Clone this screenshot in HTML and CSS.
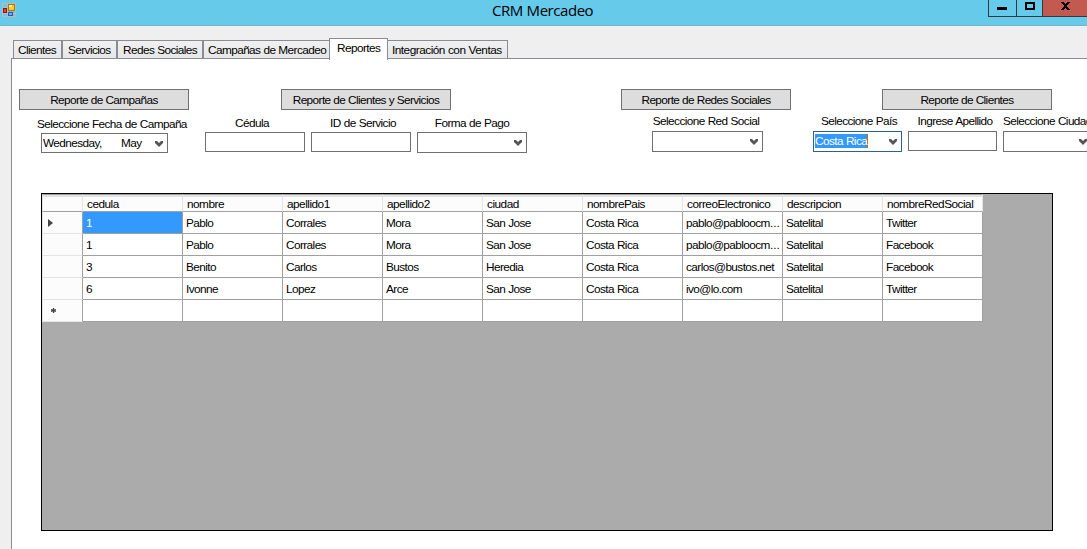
FILE: index.html
```html
<!DOCTYPE html>
<html lang="es">
<head>
<meta charset="utf-8">
<title>CRM Mercadeo</title>
<link rel="stylesheet" href="styles.css">
</head>
<body>
<header class="titlebar">
  <svg class="app-icon" width="14" height="14" viewBox="0 0 14 14" shape-rendering="crispEdges">
    <path d="M.5.5h13v13H.5zM5.500.5v13M.5 4.500h5M.5 10.500h13" fill="none" stroke="#bdb9b9"/>
    <path d="M1 5h4v5H1z" fill="#8d1414"/><path d="M2 6h2v3H2z" fill="#d9483c"/>
    <path d="M6 1h7v7H6z" fill="#a87808"/><path d="M7 2h5v5H7z" fill="#f8cb36"/><path d="M7 2h3v2H7z" fill="#ffec91"/>
    <path d="M6 9h5v4H6z" fill="#2b59b5"/><path d="M7 10h3v2H7z" fill="#78a6ee"/>
  </svg>
  <h1 class="title">CRM Mercadeo</h1>
  <div class="window-buttons">
    <span class="wbtn wbtn-min"><svg width="10" height="3"><path d="M0 0h10v3H0z"/></svg></span>
    <span class="wbtn wbtn-max"><svg width="10" height="8"><path d="M1 1h8v6H1z" fill="none" stroke="#000" stroke-width="2"/></svg></span>
    <span class="wbtn wbtn-close"><svg width="9" height="8" viewBox="0 0 9 8" shape-rendering="crispEdges"><path d="M0 0h3v1h1v1h1V1h1V0h3v1H8v1H7v1H6v2h1v1h1v1h1v1H6V7H5V6H4v1H3v1H0V7h1V6h1V5h1V3H2V2H1V1H0z"/></svg></span>
  </div>
</header>
<nav class="tabs">
  <span class="tab tab-cli">Clientes</span><span class="tab tab-ser">Servicios</span><span class="tab tab-red">Redes Sociales</span><span class="tab tab-cam">Campañas de Mercadeo</span><span class="tab tab-rep active">Reportes</span><span class="tab tab-int">Integración con Ventas</span>
</nav>
<main class="page">
  <section class="filters">
    <div class="group g-camp">
      <button class="btn">Reporte de Campañas</button>
      <div class="fields">
        <label class="field f-date"><span class="cap">Seleccione Fecha de Campaña</span><span class="box"><span class="day">Wednesday,</span><span class="month">May</span><svg class="arrow" width="8" height="6"><path d="M0 0h2l2 2 2-2h2v2L4 6 0 2z"/></svg></span></label>
      </div>
    </div>
    <div class="group g-serv">
      <button class="btn">Reporte de Clientes y Servicios</button>
      <div class="fields">
        <label class="field f-ced"><span class="cap">Cédula</span><span class="box"></span></label>
        <label class="field f-id"><span class="cap">ID de Servicio</span><span class="box"></span></label>
        <label class="field f-pago"><span class="cap">Forma de Pago</span><span class="box"><svg class="arrow" width="8" height="6"><path d="M0 0h2l2 2 2-2h2v2L4 6 0 2z"/></svg></span></label>
      </div>
    </div>
    <div class="group g-red">
      <button class="btn">Reporte de Redes Sociales</button>
      <div class="fields">
        <label class="field f-red"><span class="cap">Seleccione Red Social</span><span class="box"><svg class="arrow" width="8" height="6"><path d="M0 0h2l2 2 2-2h2v2L4 6 0 2z"/></svg></span></label>
      </div>
    </div>
    <div class="group g-cli">
      <button class="btn">Reporte de Clientes</button>
      <div class="fields">
        <label class="field f-pais"><span class="cap">Seleccione País</span><span class="box focused"><span class="selected">Costa Rica</span><svg class="arrow" width="8" height="6"><path d="M0 0h2l2 2 2-2h2v2L4 6 0 2z"/></svg></span></label>
        <label class="field f-ape"><span class="cap">Ingrese Apellido</span><span class="box"></span></label>
        <label class="field f-ciu"><span class="cap">Seleccione Ciudad</span><span class="box"><svg class="arrow" width="8" height="6"><path d="M0 0h2l2 2 2-2h2v2L4 6 0 2z"/></svg></span></label>
      </div>
    </div>
  </section>
  <section class="grid-area">
    <table class="grid">
      <thead><tr><th class="rowhead"></th><th>cedula</th><th>nombre</th><th>apellido1</th><th>apellido2</th><th>ciudad</th><th>nombrePais</th><th>correoElectronico</th><th>descripcion</th><th>nombreRedSocial</th></tr></thead>
      <tbody>
        <tr><td class="rowhead"><svg width="5" height="8"><path d="M0 0l5 4-5 4z"/></svg></td><td class="current">1</td><td>Pablo</td><td>Corrales</td><td>Mora</td><td>San Jose</td><td>Costa Rica</td><td>pablo@pabloocm<span class="dots">...</span></td><td>Satelital</td><td>Twitter</td></tr>
        <tr><td class="rowhead"></td><td>1</td><td>Pablo</td><td>Corrales</td><td>Mora</td><td>San Jose</td><td>Costa Rica</td><td>pablo@pabloocm<span class="dots">...</span></td><td>Satelital</td><td>Facebook</td></tr>
        <tr><td class="rowhead"></td><td>3</td><td>Benito</td><td>Carlos</td><td>Bustos</td><td>Heredia</td><td>Costa Rica</td><td>carlos@bustos.net</td><td>Satelital</td><td>Facebook</td></tr>
        <tr><td class="rowhead"></td><td>6</td><td>Ivonne</td><td>Lopez</td><td>Arce</td><td>San Jose</td><td>Costa Rica</td><td>ivo@lo.com</td><td>Satelital</td><td>Twitter</td></tr>
        <tr><td class="rowhead"><svg class="star" width="5" height="5"><path d="M2.500 0v5M0 1.500l5 2M5 1.500l-5 2" stroke="#444" stroke-width="1.300"/></svg></td><td></td><td></td><td></td><td></td><td></td><td></td><td></td><td></td><td></td></tr>
      </tbody>
    </table>
  </section>
</main>
</body>
</html>
```
FILE: styles.css
```css
* { box-sizing: border-box; }
body {
  margin: 0;
  width: 1087px;
  height: 549px;
  overflow: hidden;
  display: flex;
  flex-direction: column;
  background: #efefef;
  color: #000;
  font: 11.8px/14px "Liberation Sans", Arial, sans-serif;
  letter-spacing: -0.58px;
  word-spacing: 0.3px;
  white-space: nowrap;
}
svg { display: block; flex: none; }
.titlebar {
  height: 26px;
  flex: none;
  display: flex;
  align-items: flex-start;
  background: #66caea;
  border-bottom: 1px solid #70b4ca;
}
.app-icon { margin: 3px 0 0 2px; }
.title {
  margin: 0 0 0 476px;
  width: 496px;
  font: 15px/21px "Open Sans", "Noto Sans", sans-serif;
  letter-spacing: -0.45px;
}
.window-buttons { display: flex; width: 99px; flex: none; height: 17px; border-bottom: 1px solid #383838; }
.wbtn { border-left: 1px solid #383838; display: flex; }
.wbtn-min { width: 28px; padding: 7px 0 0 8px; }
.wbtn-max { width: 26px; padding: 2px 0 0 8px; }
.wbtn-close { width: 45px; padding: 2px 0 0 18px; background: #c35a50; }

.tabs { height: 32px; flex: none; display: flex; align-items: flex-end; padding-left: 13px; }
.tab {
  height: 18px;
  border: 1px solid #898c95;
  border-bottom: 0;
  background: linear-gradient(#f0f0f0, #e7e7e7);
  padding: 2px 0 0 5px;
}
.tab-cli { width: 49px; padding-left: 4px; }
.tab-ser { width: 55px; }
.tab-red { width: 86px; }
.tab-cam { width: 126px; border-right: 0; padding-left: 4px; }
.tab-rep { width: 59px; padding-left: 7px; }
.tab-int { width: 120px; border-left: 0; padding-left: 4px; letter-spacing: -0.5px; }
.tab.active { height: 22px; margin-bottom: -2px; background: #fff; z-index: 1; padding-top: 2px; }

.page {
  flex: 1;
  margin-left: 11px;
  border: 1px solid #898c95;
  border-width: 1px 0 0 1px;
  background: #fff;
}
.filters { display: flex; height: 134px; padding: 30px 0 0 7px; }
.group { flex: none; }
.g-camp { width: 186px; }
.g-serv { width: 416px; }
.g-red { width: 192px; }
.btn {
  display: block;
  width: 170px;
  height: 21px;
  padding: 1px 0 0;
  border: 1px solid #707070;
  background: #ddd;
  color: #000;
  font: inherit;
  letter-spacing: inherit;
}
.g-serv .btn { margin-left: 76px; }
.g-cli .btn { margin-left: 69px; }
.fields { display: flex; gap: 6px; }
.field { flex: none; display: flex; flex-direction: column; }
.cap { height: 16px; text-align: center; }
.box {
  height: 20px;
  border: 1px solid #707070;
  background: #fff;
  display: flex;
  align-items: flex-start;
}
.arrow { margin: 7px 4px 0 auto; fill: #555; }
.f-date { width: 127px; margin: 7px 0 0 22px; }
.f-date .cap { margin: 0 -22px 0 -4px; text-align: left; }
.f-date .box { padding: 2px 0 0 1px; }
.f-date .arrow { margin-top: 5px; }
.day { width: 78px; }
.g-serv .field { padding-top: 6px; width: 100px; }
.g-serv .f-pago { width: 110px; }
.g-serv .f-ced .cap { margin-right: 6px; }
.g-serv .f-id .cap { margin-left: 4px; }
.f-pago .box, .f-red .box, .f-pais .box, .f-ciu .box { height: 21px; }
.f-red { width: 111px; margin: 4px 0 0 31px; }
.g-cli .fields { padding-top: 4px; }
.f-red .cap, .g-cli .cap { height: 17px; }
.f-red .cap { margin-right: 3px; }
.f-pais, .f-ape, .f-ciu { width: 89px; }
.f-pais .cap { margin-left: 3px; }
.f-ape .cap { margin-left: 5px; }
.f-ciu .cap { text-align: left; }
.box.focused { border-color: #2c628b; padding: 2px 0 0 1px; }
.focused .arrow { margin-top: 5px; }
.selected { background: #39f; color: #fff; border-right: 1px solid #cc6600; height: 14px; }

.grid-area { margin-left: 29px; width: 1012px; height: 338px; border: 1px solid #000; background: #ababab; }
.grid { border-collapse: separate; border-spacing: 0; table-layout: fixed; width: 941px; }
.grid th, .grid td { padding: 0 0 0 3px; font-weight: normal; text-align: left; overflow: hidden; }
.grid th {
  width: 100px;
  height: 18px;
  padding: 2px 0 0 4px;
  background: #fcfcfc;
  border-top: 1px solid #a0a0a0;
  border-bottom: 1px solid #a0a0a0;
  border-right: 1px solid #e3e3e3;
  box-shadow: inset 0 2px #e3e3e3;
  letter-spacing: -0.5px;
}
.grid td { height: 22px; background: #fff; border-right: 1px solid #a0a0a0; border-bottom: 1px solid #a0a0a0; }
.grid .rowhead { width: 41px; background: #fcfcfc; border-left: 1px solid #e3e3e3; }
.grid td.rowhead { border-bottom-color: #e3e3e3; padding-left: 5px; fill: #444; }
.grid td.current { background: #39f; color: #fff; }
.dots { letter-spacing: 0; }
.star { margin-left: 3px; }
```
